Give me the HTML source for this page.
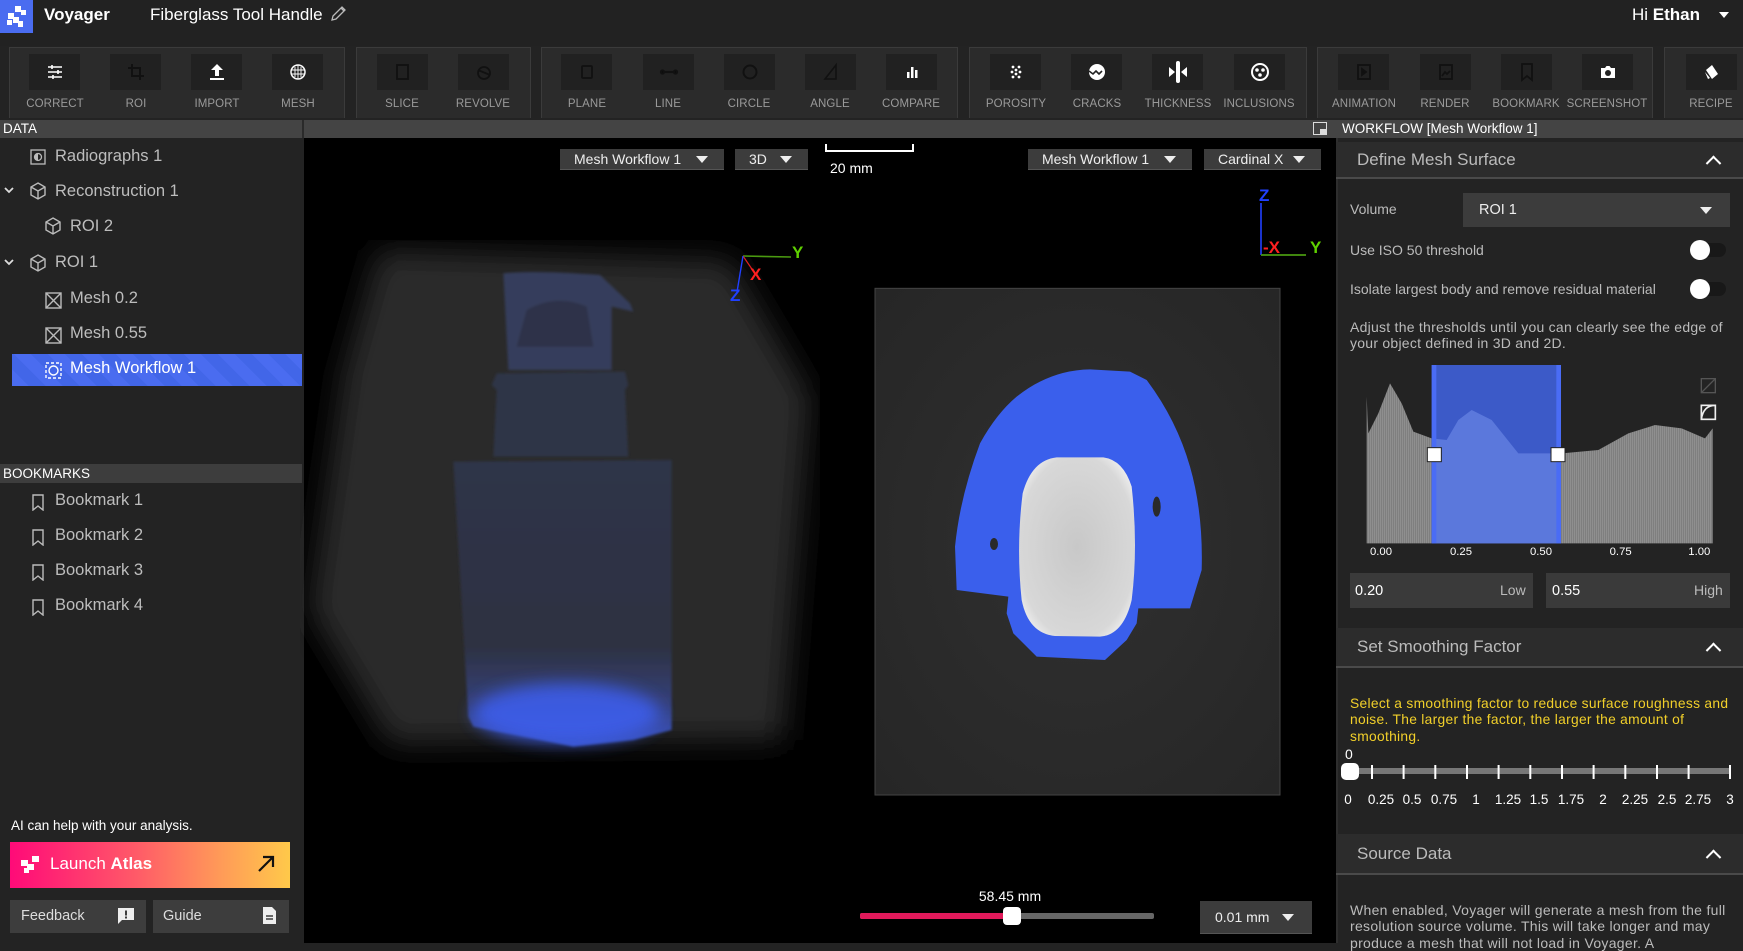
<!DOCTYPE html>
<html><head><meta charset="utf-8">
<style>
*{box-sizing:border-box;margin:0;padding:0}
body{width:1743px;height:943px;overflow:hidden;background:#232323;font-family:"Liberation Sans",sans-serif;color:#ccc;position:relative}
.a{position:absolute}
.grp{position:absolute;top:47px;height:71px;background:#2b2b2b;border:1px solid #3b3b3b;border-bottom:none}
.btn{position:absolute;top:54px;width:51px;height:36px;background:#212121;display:flex;align-items:center;justify-content:center}
.lbl{position:absolute;top:98px;width:90px;text-align:center;font-size:11.5px;color:#9a9a9a;letter-spacing:0.1px}
.tree{position:absolute;font-size:16.5px;color:#bdbdbd;white-space:nowrap}
.dd{position:absolute;background:#3c3c3c;color:#eee;font-size:14px;display:flex;align-items:center;padding-left:14px;border-bottom:1px solid #555}
.tri{width:0;height:0;border-left:6px solid transparent;border-right:6px solid transparent;border-top:7px solid #eee;position:absolute}
.sech{position:absolute;left:1336px;width:407px;background:#2c2c2c;border-bottom:2px solid #4a4a4a;font-size:17px;color:#bbb;padding-left:21px;display:flex;align-items:center}
.chev{position:absolute;right:24px;top:50%;width:11px;height:11px;border-left:2.5px solid #fff;border-top:2.5px solid #fff;transform:translateY(-20%) rotate(45deg)}
.t14{font-size:14px;color:#bbb}
</style></head><body>

<div class="a" style="left:0;top:0;width:1743px;height:46px;background:#222"></div>
<div class="a" style="left:0;top:0;width:33px;height:33px;background:#4a6cf0">
<svg width="33" height="33" viewBox="0 0 33 33"><g fill="#fff"><rect x="15" y="6" width="6" height="6"/><rect x="21" y="10" width="5" height="5"/><rect x="8" y="13" width="6" height="6"/><rect x="13" y="17" width="6" height="6"/><rect x="18" y="21" width="5" height="6"/><rect x="7" y="20" width="5" height="5"/></g></svg></div>
<div class="a" style="left:44px;top:5px;font-size:17px;font-weight:bold;color:#fff">Voyager</div>
<div class="a" style="left:150px;top:5px;font-size:17px;color:#fff">Fiberglass Tool Handle</div>
<svg class="a" style="left:329px;top:5px" width="18" height="18" viewBox="0 0 18 18"><path d="M3 15 L4 11 L13 2 L16 5 L7 14 Z M12 3 L15 6" fill="none" stroke="#bbb" stroke-width="1.3"/></svg>
<div class="a" style="left:1632px;top:5px;font-size:17px;color:#fff">Hi <b>Ethan</b></div>
<div class="tri" style="left:1719px;top:12px;border-top-color:#fff;border-left-width:5px;border-right-width:5px;border-top-width:6px"></div>

<div class="grp" style="left:9px;width:336px"></div>
<div class="grp" style="left:356px;width:175px"></div>
<div class="grp" style="left:541px;width:417px"></div>
<div class="grp" style="left:969px;width:338px"></div>
<div class="grp" style="left:1317px;width:336px"></div>
<div class="grp" style="left:1664px;width:85px"></div>

<div class="btn" style="left:29px"><svg width="20" height="20" viewBox="0 0 20 20" stroke="#fff" stroke-width="1.6"><path d="M3 5h14M3 10h14M3 15h14"/><path d="M7 3v4M13 8v4M8 13v4"/></svg></div>
<div class="lbl" style="left:10px">CORRECT</div>
<div class="btn" style="left:110px"><svg width="20" height="20" viewBox="0 0 20 20" fill="none" stroke="#111" stroke-width="2"><path d="M6 2v12h12M2 6h12v12"/></svg></div>
<div class="lbl" style="left:91px">ROI</div>
<div class="btn" style="left:191px"><svg width="20" height="20" viewBox="0 0 20 20" fill="#fff"><path d="M10 2l6 6h-4v6H8V8H4z"/><rect x="3" y="16" width="14" height="2"/></svg></div>
<div class="lbl" style="left:172px">IMPORT</div>
<div class="btn" style="left:272px"><svg width="20" height="20" viewBox="0 0 20 20" fill="none" stroke="#fff" stroke-width="1.5"><circle cx="10" cy="10" r="7"/><path d="M7 5v10M10 3v14M13 5v10M4 8h12M4 12h12" stroke-width="0.9"/></svg></div>
<div class="lbl" style="left:253px">MESH</div>

<div class="btn" style="left:377px"><svg width="20" height="20" viewBox="0 0 20 20" fill="none" stroke="#111" stroke-width="1.8"><rect x="4" y="3" width="11" height="14"/></svg></div>
<div class="lbl" style="left:357px">SLICE</div>
<div class="btn" style="left:458px"><svg width="20" height="20" viewBox="0 0 20 20" fill="none" stroke="#111" stroke-width="1.8"><circle cx="10" cy="11" r="6"/><path d="M4 8l12 5"/></svg></div>
<div class="lbl" style="left:438px">REVOLVE</div>

<div class="btn" style="left:561px"><svg width="20" height="20" viewBox="0 0 20 20" fill="none" stroke="#111" stroke-width="1.8"><rect x="5" y="4" width="10" height="12" rx="1"/></svg></div>
<div class="lbl" style="left:542px">PLANE</div>
<div class="btn" style="left:643px"><svg width="20" height="20" viewBox="0 0 20 20" stroke="#111" stroke-width="2.2"><path d="M3 10h14"/><circle cx="3.5" cy="10" r="1.5"/><circle cx="16.5" cy="10" r="1.5"/></svg></div>
<div class="lbl" style="left:623px">LINE</div>
<div class="btn" style="left:724px"><svg width="20" height="20" viewBox="0 0 20 20" fill="none" stroke="#111" stroke-width="2"><circle cx="10" cy="10" r="6.5"/></svg></div>
<div class="lbl" style="left:704px">CIRCLE</div>
<div class="btn" style="left:805px"><svg width="20" height="20" viewBox="0 0 20 20" fill="none" stroke="#111" stroke-width="1.6"><path d="M15 3L4 17h11z"/></svg></div>
<div class="lbl" style="left:785px">ANGLE</div>
<div class="btn" style="left:886px"><svg width="20" height="20" viewBox="0 0 20 20" fill="#fff"><rect x="5" y="10" width="2.5" height="6"/><rect x="9" y="5" width="2.5" height="11"/><rect x="13" y="8" width="2.5" height="8"/></svg></div>
<div class="lbl" style="left:866px">COMPARE</div>

<div class="btn" style="left:990px"><svg width="20" height="20" viewBox="0 0 20 20" fill="#fff"><circle cx="7" cy="5" r="1.4"/><circle cx="13" cy="5" r="1.4"/><circle cx="10" cy="8" r="1.4"/><circle cx="6" cy="10" r="1.4"/><circle cx="14" cy="10" r="1.4"/><circle cx="10" cy="12" r="1.4"/><circle cx="7" cy="15" r="1.4"/><circle cx="13" cy="15" r="1.4"/></svg></div>
<div class="lbl" style="left:971px">POROSITY</div>
<div class="btn" style="left:1071px"><svg width="22" height="22" viewBox="0 0 22 22"><circle cx="11" cy="11" r="8" fill="#fff"/><path d="M3 10l4 3 3-3 3 3 3-3" fill="none" stroke="#222" stroke-width="1.6"/></svg></div>
<div class="lbl" style="left:1052px">CRACKS</div>
<div class="btn" style="left:1152px"><svg width="22" height="24" viewBox="0 0 22 24" fill="#fff"><rect x="9" y="1" width="4" height="22" rx="2"/><path d="M2 7l6 5-6 5zM20 7l-6 5 6 5z"/></svg></div>
<div class="lbl" style="left:1133px">THICKNESS</div>
<div class="btn" style="left:1234px"><svg width="22" height="22" viewBox="0 0 22 22"><circle cx="11" cy="11" r="8" fill="none" stroke="#fff" stroke-width="2"/><g fill="#fff"><circle cx="8" cy="9" r="1.8"/><circle cx="14" cy="9" r="1.8"/><circle cx="11" cy="14" r="1.8"/></g></svg></div>
<div class="lbl" style="left:1214px">INCLUSIONS</div>

<div class="btn" style="left:1338px"><svg width="20" height="20" viewBox="0 0 20 20" fill="none" stroke="#111" stroke-width="1.8"><rect x="4" y="3" width="12" height="14"/><path d="M8 7l4 3-4 3z" fill="#111"/></svg></div>
<div class="lbl" style="left:1319px">ANIMATION</div>
<div class="btn" style="left:1420px"><svg width="20" height="20" viewBox="0 0 20 20" fill="none" stroke="#111" stroke-width="1.8"><rect x="4" y="3" width="12" height="14"/><path d="M6 14l3-4 2 2 3-3" /></svg></div>
<div class="lbl" style="left:1400px">RENDER</div>
<div class="btn" style="left:1501px"><svg width="20" height="20" viewBox="0 0 20 20" fill="none" stroke="#111" stroke-width="1.8"><path d="M5 2h10v16l-5-4-5 4z"/></svg></div>
<div class="lbl" style="left:1481px">BOOKMARK</div>
<div class="btn" style="left:1582px"><svg width="20" height="20" viewBox="0 0 20 20"><path d="M3 6h4l1.5-2h3L13 6h4v10H3z" fill="#fff"/><circle cx="10" cy="11" r="3" fill="#222"/></svg></div>
<div class="lbl" style="left:1562px">SCREENSHOT</div>
<div class="btn" style="left:1686px"><svg width="20" height="20" viewBox="0 0 20 20" fill="#fff"><path d="M4 8l6-5 6 9-6 5z"/><path d="M3 10l3 7 2-1z"/></svg></div>
<div class="lbl" style="left:1666px">RECIPE</div>

<div class="a" style="left:0;top:120px;width:1743px;height:18px;background:#444"></div>
<div class="a" style="left:302px;top:120px;width:2px;height:18px;background:#2a2a2a"></div>
<div class="a" style="left:3px;top:121px;font-size:13.5px;color:#fff">DATA</div>
<div class="a" style="left:1313px;top:122px;width:14px;height:13px;border:1.5px solid #ddd"><div class="a" style="right:0;bottom:0;width:6px;height:5px;background:#ddd"></div></div>
<div class="a" style="left:1342px;top:121px;font-size:13.5px;color:#fff">WORKFLOW [Mesh Workflow 1]</div>

<div class="a" style="left:0;top:138px;width:302px;height:805px;background:#232323"></div>
<svg class="a" style="left:30px;top:149px" width="16" height="16" viewBox="0 0 16 16"><rect x="1" y="1" width="14" height="14" fill="none" stroke="#bbb" stroke-width="1.3"/><circle cx="8" cy="8" r="3.5" fill="none" stroke="#bbb" stroke-width="1.3"/><path d="M8 4.5a3.5 3.5 0 0 0 0 7z" fill="#bbb"/></svg>
<div class="tree" style="left:55px;top:147px">Radiographs 1</div>
<svg class="a" style="left:3px;top:186px" width="12" height="10" viewBox="0 0 12 10"><path d="M2 2l4 4 4-4" fill="none" stroke="#ddd" stroke-width="1.8"/></svg>
<svg class="a" style="left:29px;top:182px" width="18" height="18" viewBox="0 0 18 18" fill="none" stroke="#bbb" stroke-width="1.4"><path d="M9 1l7 4v8l-7 4-7-4V5z M2 5l7 4 7-4 M9 9v8"/></svg>
<div class="tree" style="left:55px;top:182px">Reconstruction 1</div>
<svg class="a" style="left:44px;top:217px" width="18" height="18" viewBox="0 0 18 18" fill="none" stroke="#bbb" stroke-width="1.4"><path d="M9 1l7 4v8l-7 4-7-4V5z M2 5l7 4 7-4 M9 9v8"/></svg>
<div class="tree" style="left:70px;top:217px">ROI 2</div>
<svg class="a" style="left:3px;top:258px" width="12" height="10" viewBox="0 0 12 10"><path d="M2 2l4 4 4-4" fill="none" stroke="#ddd" stroke-width="1.8"/></svg>
<svg class="a" style="left:29px;top:254px" width="18" height="18" viewBox="0 0 18 18" fill="none" stroke="#bbb" stroke-width="1.4"><path d="M9 1l7 4v8l-7 4-7-4V5z M2 5l7 4 7-4 M9 9v8"/></svg>
<div class="tree" style="left:55px;top:253px">ROI 1</div>
<svg class="a" style="left:45px;top:292px" width="17" height="17" viewBox="0 0 17 17" fill="none" stroke="#bbb" stroke-width="1.4"><rect x="1" y="1" width="15" height="15"/><path d="M1 1l15 15M16 1L1 16"/></svg>
<div class="tree" style="left:70px;top:289px">Mesh 0.2</div>
<svg class="a" style="left:45px;top:327px" width="17" height="17" viewBox="0 0 17 17" fill="none" stroke="#bbb" stroke-width="1.4"><rect x="1" y="1" width="15" height="15"/><path d="M1 1l15 15M16 1L1 16"/></svg>
<div class="tree" style="left:70px;top:324px">Mesh 0.55</div>
<div class="a" style="left:12px;top:354px;width:290px;height:32px;background:repeating-linear-gradient(45deg,#4a6cf0 0 12px,#4266e8 12px 24px)"></div>
<svg class="a" style="left:45px;top:362px" width="17" height="17" viewBox="0 0 17 17" fill="none" stroke="#fff" stroke-width="1.4"><rect x="1" y="1" width="15" height="15" stroke-dasharray="3 2"/><circle cx="8.5" cy="8.5" r="4.5"/></svg>
<div class="tree" style="left:70px;top:359px;color:#fff">Mesh Workflow 1</div>

<div class="a" style="left:0;top:464px;width:302px;height:19px;background:#3d3d3d"></div>
<div class="a" style="left:3px;top:466px;font-size:13.5px;color:#fff">BOOKMARKS</div>
<svg class="a" style="left:31px;top:494px" width="14" height="17" viewBox="0 0 14 17"><path d="M2 1h10v15l-5-4-5 4z" fill="none" stroke="#bbb" stroke-width="1.4"/></svg>
<div class="tree" style="left:55px;top:491px">Bookmark 1</div>
<svg class="a" style="left:31px;top:529px" width="14" height="17" viewBox="0 0 14 17"><path d="M2 1h10v15l-5-4-5 4z" fill="none" stroke="#bbb" stroke-width="1.4"/></svg>
<div class="tree" style="left:55px;top:526px">Bookmark 2</div>
<svg class="a" style="left:31px;top:564px" width="14" height="17" viewBox="0 0 14 17"><path d="M2 1h10v15l-5-4-5 4z" fill="none" stroke="#bbb" stroke-width="1.4"/></svg>
<div class="tree" style="left:55px;top:561px">Bookmark 3</div>
<svg class="a" style="left:31px;top:599px" width="14" height="17" viewBox="0 0 14 17"><path d="M2 1h10v15l-5-4-5 4z" fill="none" stroke="#bbb" stroke-width="1.4"/></svg>
<div class="tree" style="left:55px;top:596px">Bookmark 4</div>

<div class="a" style="left:11px;top:818px;font-size:13.5px;color:#fff">AI can help with your analysis.</div>
<div class="a" style="left:10px;top:842px;width:280px;height:46px;background:linear-gradient(90deg,#ff0a78,#ff5a68 45%,#ff9a58 75%,#ffc94a)"></div>
<svg class="a" style="left:20px;top:855px" width="22" height="20" viewBox="0 0 22 20" fill="#fff"><rect x="12" y="1" width="7" height="6"/><rect x="1" y="5" width="7" height="6"/><rect x="7" y="9" width="7" height="6"/><rect x="4" y="13" width="5" height="5"/></svg>
<div class="a" style="left:50px;top:854px;font-size:17px;color:#fff">Launch <b>Atlas</b></div>
<svg class="a" style="left:256px;top:854px" width="20" height="20" viewBox="0 0 20 20" stroke="#111" stroke-width="2.2" fill="none"><path d="M3 17L17 3M7 3h10v10"/></svg>
<div class="a" style="left:10px;top:900px;width:136px;height:33px;background:#3d3d3d"></div>
<div class="a" style="left:21px;top:908px;font-size:14.5px;color:#ddd">Feedback</div>
<svg class="a" style="left:117px;top:907px" width="18" height="18" viewBox="0 0 18 18"><path d="M1 1h16v12H5l-4 4z" fill="#eee"/><rect x="8" y="3.5" width="2" height="5" fill="#3d3d3d"/><rect x="8" y="9.5" width="2" height="2" fill="#3d3d3d"/></svg>
<div class="a" style="left:153px;top:900px;width:136px;height:33px;background:#3d3d3d"></div>
<div class="a" style="left:163px;top:908px;font-size:14.5px;color:#ddd">Guide</div>
<svg class="a" style="left:262px;top:906px" width="15" height="19" viewBox="0 0 15 19"><path d="M1 1h9l4 4v13H1z" fill="#eee"/><path d="M4 10h7M4 13h7" stroke="#3d3d3d" stroke-width="1.5"/></svg>

<div class="a" style="left:304px;top:138px;width:1032px;height:805px;background:#000"></div>

<svg class="a" style="left:300px;top:240px" width="520" height="600" viewBox="0 0 1560 1800">
<defs><filter id="bl" x="-20%" y="-20%" width="140%" height="140%"><feGaussianBlur stdDeviation="45"/></filter>
<filter id="bl2" x="-30%" y="-30%" width="160%" height="160%"><feGaussianBlur stdDeviation="25"/></filter>
<filter id="bl3"><feGaussianBlur stdDeviation="4"/></filter>
<linearGradient id="bod" x1="0" y1="0" x2="0" y2="1"><stop offset="0" stop-color="#2f3448"/><stop offset="0.65" stop-color="#2d3242"/><stop offset="0.85" stop-color="#35407a"/><stop offset="1" stop-color="#3a55c8"/></linearGradient></defs>
<path d="M235 30 L1290 60 L1530 470 L1450 1500 L270 1510 L30 1110 L130 400 Z" fill="#2c2c2c" filter="url(#bl)"/>
<g filter="url(#bl3)">
<path d="M460 665 L1115 660 L1115 1470 L1000 1500 L820 1520 L520 1460 L505 1430 Z" fill="url(#bod)"/>
<path d="M590 400 L975 395 L985 435 L975 450 L985 650 L580 650 L590 450 L575 435 Z" fill="#2f3447"/>
<path d="M610 100 Q700 90 900 105 L990 190 L1000 215 L935 200 L935 390 L625 390 Z" fill="#343c5c"/>
<path d="M650 320 L880 320 L860 200 Q770 160 680 210 Z" fill="#2e3348"/>
</g>
<ellipse cx="800" cy="1420" rx="280" ry="90" fill="#3d5ef0" opacity="0.85" filter="url(#bl2)"/>
</svg>

<div class="dd" style="left:560px;top:149px;width:164px;height:21px">Mesh Workflow 1<div class="tri" style="right:16px;top:7px"></div></div>
<div class="dd" style="left:735px;top:149px;width:73px;height:21px">3D<div class="tri" style="right:16px;top:7px"></div></div>
<div class="a" style="left:825px;top:144px;width:89px;height:8px;border:2px solid #fff;border-top:none"></div>
<div class="a" style="left:830px;top:160px;font-size:14px;color:#fff">20 mm</div>
<div class="dd" style="left:1028px;top:149px;width:164px;height:21px">Mesh Workflow 1<div class="tri" style="right:16px;top:7px"></div></div>
<div class="dd" style="left:1204px;top:149px;width:117px;height:21px">Cardinal X<div class="tri" style="right:16px;top:7px"></div></div>

<svg class="a" style="left:730px;top:235px" width="80" height="70" viewBox="0 0 80 70">
<path d="M13 21 L61 22" stroke="#4a9a10" stroke-width="1.6"/><path d="M13 21 L26 40" stroke="#e02020" stroke-width="1.2"/><path d="M13 21 L7 57" stroke="#2040ff" stroke-width="1.4"/>
<text x="62" y="23" fill="#5fd000" font-size="17" font-family="Liberation Sans" font-weight="bold">Y</text>
<text x="20" y="45" fill="#ff2020" font-size="17" font-family="Liberation Sans" font-weight="bold">X</text>
<text x="0" y="66" fill="#2040ff" font-size="17" font-family="Liberation Sans" font-weight="bold">Z</text></svg>
<svg class="a" style="left:1255px;top:185px" width="80" height="75" viewBox="0 0 80 75">
<path d="M6 18 V70" stroke="#2040ff" stroke-width="1.6"/><path d="M6 70 H51" stroke="#4a9a10" stroke-width="1.8"/>
<text x="4" y="16" fill="#2040ff" font-size="17" font-family="Liberation Sans" font-weight="bold">Z</text>
<text x="8" y="68" fill="#ff2020" font-size="17" font-family="Liberation Sans" font-weight="bold">-X</text>
<text x="55" y="68" fill="#5fd000" font-size="17" font-family="Liberation Sans" font-weight="bold">Y</text></svg>

<svg class="a" style="left:870px;top:280px" width="420" height="520" viewBox="0 0 1260 1560">
<defs><radialGradient id="sg" cx="0.5" cy="0.5" r="0.7"><stop offset="0" stop-color="#303030"/><stop offset="1" stop-color="#262626"/></radialGradient>
<radialGradient id="wg" cx="0.5" cy="0.5" r="0.6"><stop offset="0" stop-color="#c8c8c8"/><stop offset="0.85" stop-color="#d8d8d8"/><stop offset="1" stop-color="#eeeeee"/></radialGradient></defs>
<rect x="15" y="25" width="1215" height="1520" fill="url(#sg)" stroke="#444" stroke-width="3"/>
<path d="M440 350 Q540 270 660 268 L780 275 L830 300 Q920 420 960 560 Q1000 700 995 870 L960 985 L805 985 L800 1030 L770 1080 L705 1140 L500 1130 L430 1060 L410 1000 L415 950 L260 930 L255 800 Q270 650 330 490 Q380 400 440 350 Z" fill="#3a5fec"/>
<path d="M560 532 L700 532 Q760 540 785 620 Q805 800 785 960 Q760 1065 690 1070 L555 1068 Q475 1060 455 960 Q438 800 458 640 Q485 540 560 532 Z" fill="url(#wg)"/>
<ellipse cx="372" cy="792" rx="12" ry="18" fill="#2a2a2a"/>
<ellipse cx="860" cy="680" rx="12" ry="30" fill="#2a2a2a"/>
</svg>

<div class="a" style="left:960px;top:888px;width:100px;text-align:center;font-size:14px;color:#fff">58.45 mm</div>
<div class="a" style="left:860px;top:913px;width:294px;height:6px;background:#666;border-radius:2px"></div>
<div class="a" style="left:860px;top:913px;width:152px;height:6px;background:#e0195a;border-radius:2px"></div>
<div class="a" style="left:1003px;top:907px;width:18px;height:18px;background:#fff;border-radius:4px"></div>
<div class="dd" style="left:1200px;top:901px;width:112px;height:33px;padding-left:15px">0.01 mm<div class="tri" style="right:18px;top:13px"></div></div>

<div class="a" style="left:1336px;top:138px;width:407px;height:805px;background:#232323;border-left:2px solid #2e2e2e"></div>
<div class="sech" style="top:142px;height:37px">Define Mesh Surface<div class="chev"></div></div>
<div class="a t14" style="left:1350px;top:201px">Volume</div>
<div class="dd" style="left:1463px;top:193px;width:267px;height:34px;padding-left:16px;border-bottom:none;font-size:14.5px">ROI 1<div class="tri" style="right:18px;top:14px"></div></div>
<div class="a t14" style="left:1350px;top:242px">Use ISO 50 threshold</div>
<div class="a" style="left:1690px;top:243px;width:36px;height:14px;background:#181818;border-radius:7px"></div>
<div class="a" style="left:1690px;top:240px;width:20px;height:20px;background:#fff;border-radius:50%"></div>
<div class="a t14" style="left:1350px;top:281px">Isolate largest body and remove residual material</div>
<div class="a" style="left:1690px;top:282px;width:36px;height:14px;background:#181818;border-radius:7px"></div>
<div class="a" style="left:1690px;top:279px;width:20px;height:20px;background:#fff;border-radius:50%"></div>
<div class="a t14" style="left:1350px;top:319px;line-height:16px;width:380px;letter-spacing:0.25px">Adjust the thresholds until you can clearly see the edge of your object defined in 3D and 2D.</div>

<svg class="a" style="left:1335px;top:120px" width="408" height="500" viewBox="0 0 1224 1500">
<defs><pattern id="st" width="6" height="10" patternUnits="userSpaceOnUse"><rect width="6" height="10" fill="#8f8f8f"/><rect width="2" height="10" fill="#777"/></pattern></defs>
<path d="M95 830 L100 940 L130 880 L165 790 L200 850 L235 935 L290 955 L335 960 L370 900 L410 870 L470 900 L550 1000 L680 1000 L790 990 L880 940 L960 915 L1040 925 L1110 955 L1133 925 L1133 1270 L95 1270 Z" fill="url(#st)"/>
<rect x="290" y="735" width="388" height="535" fill="#3c5ac8"/>
<path d="M290 955 L335 960 L370 900 L410 870 L470 900 L550 1000 L678 1000 L678 1270 L290 1270 Z" fill="#5b78dc"/>
<rect x="290" y="735" width="14" height="535" fill="#4a6cf5"/><rect x="664" y="735" width="14" height="535" fill="#4a6cf5"/>
<rect x="277" y="983" width="42" height="42" fill="#fff" stroke="#222" stroke-width="3"/>
<rect x="648" y="983" width="42" height="42" fill="#fff" stroke="#222" stroke-width="3"/>
<rect x="1099" y="776" width="42" height="42" fill="none" stroke="#555" stroke-width="4"/><path d="M1099 818 L1141 776" stroke="#555" stroke-width="4"/>
<rect x="1099" y="856" width="42" height="42" fill="none" stroke="#eee" stroke-width="5"/><path d="M1099 898 Q1105 856 1141 856" stroke="#eee" stroke-width="5" fill="none"/>
<g font-family="Liberation Sans" font-size="34" fill="#fff" text-anchor="middle"><text x="138" y="1305">0.00</text><text x="378" y="1305">0.25</text><text x="618" y="1305">0.50</text><text x="857" y="1305">0.75</text><text x="1093" y="1305">1.00</text></g>
</svg>

<div class="a" style="left:1350px;top:573px;width:183px;height:35px;background:#3a3a3a"></div>
<div class="a" style="left:1355px;top:583px;font-size:14.5px;color:#fff">0.20</div>
<div class="a" style="left:1500px;top:582px;font-size:14px;color:#bbb">Low</div>
<div class="a" style="left:1546px;top:573px;width:184px;height:35px;background:#3a3a3a"></div>
<div class="a" style="left:1552px;top:583px;font-size:14.5px;color:#fff">0.55</div>
<div class="a" style="left:1694px;top:582px;font-size:14px;color:#bbb">High</div>

<div class="sech" style="top:628px;height:40px">Set Smoothing Factor<div class="chev"></div></div>
<div class="a" style="left:1350px;top:696px;width:385px;font-size:13.8px;line-height:16.3px;color:#f2d02a;letter-spacing:0.3px">Select a smoothing factor to reduce surface roughness and noise. The larger the factor, the larger the amount of smoothing.</div>
<div class="a" style="left:1345px;top:746px;font-size:14px;color:#fff">0</div>
<div class="a" style="left:1350px;top:768px;width:380px;height:6px;background:#777"></div>
<svg class="a" style="left:1340px;top:762px" width="400" height="20" viewBox="0 0 400 20"><g stroke="#fff" stroke-width="2"><path d="M32 3v14M63.6 3v14M95.3 3v14M127 3v14M158.6 3v14M190.3 3v14M222 3v14M253.6 3v14M285.3 3v14M317 3v14M348.6 3v14M390 3v14"/></g></svg>
<div class="a" style="left:1341px;top:763px;width:18px;height:17px;background:#fff;border-radius:5px"></div>
<svg class="a" style="left:1340px;top:787px" width="403" height="24"><g font-family="Liberation Sans" font-size="13.5" fill="#fff" text-anchor="middle"><text x="8" y="17">0</text><text x="41" y="17">0.25</text><text x="72" y="17">0.5</text><text x="104" y="17">0.75</text><text x="136" y="17">1</text><text x="168" y="17">1.25</text><text x="199" y="17">1.5</text><text x="231" y="17">1.75</text><text x="263" y="17">2</text><text x="295" y="17">2.25</text><text x="327" y="17">2.5</text><text x="358" y="17">2.75</text><text x="390" y="17">3</text></g></svg>

<div class="sech" style="top:834px;height:41px">Source Data<div class="chev"></div></div>
<div class="a" style="left:1350px;top:902px;width:385px;font-size:14px;line-height:16.3px;color:#bbb;letter-spacing:0.3px">When enabled, Voyager will generate a mesh from the full resolution source volume. This will take longer and may produce a mesh that will not load in Voyager. A</div>

</body></html>
